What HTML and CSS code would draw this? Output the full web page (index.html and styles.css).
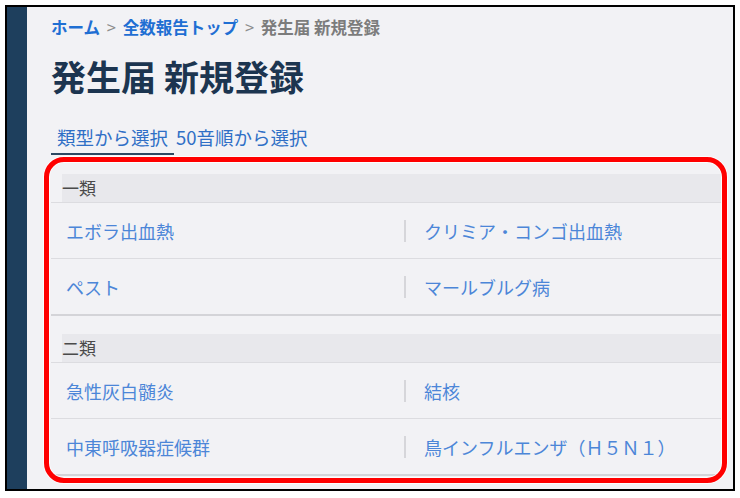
FILE: index.html
```html
<!DOCTYPE html>
<html lang="ja">
<head>
    <meta charset="UTF-8">
    <title>発生届 新規登録</title>
    <link rel="stylesheet" href="styles.css">
</head>
<body>
    <div class="frame">
        <div class="sidebar"></div>
        <div class="main">
            <div class="breadcrumb">
                <a class="crumb-link">ホーム</a>
                <span class="crumb-sep">&gt;</span>
                <a class="crumb-link">全数報告トップ</a>
                <span class="crumb-sep">&gt;</span>
                <span class="crumb-current">発生届 新規登録</span>
            </div>
            <h1 class="page-title">発生届 新規登録</h1>
            <div class="tabs">
                <a class="tab active">類型から選択</a>
                <a class="tab tab-second">50音順から選択</a>
            </div>
            <div class="panel">
                <!-- 一類 -->
                <div class="group">
                    <div class="group-head"><div class="group-header">一類</div></div>
                    <div class="row">
                        <a class="cell">エボラ出血熱</a>
                        <a class="cell cell-right">クリミア・コンゴ出血熱</a>
                    </div>
                    <div class="row">
                        <a class="cell">ペスト</a>
                        <a class="cell cell-right">マールブルグ病</a>
                    </div>
                </div>
                <!-- 二類 -->
                <div class="group">
                    <div class="group-head"><div class="group-header">二類</div></div>
                    <div class="row">
                        <a class="cell">急性灰白髄炎</a>
                        <a class="cell cell-right">結核</a>
                    </div>
                    <div class="row">
                        <a class="cell">中東呼吸器症候群</a>
                        <a class="cell cell-right">鳥インフルエンザ（Ｈ５Ｎ１）</a>
                    </div>
                </div>
            </div>
            <div class="highlight"></div>
        </div>
    </div>
</body>
</html>
```

FILE: styles.css
```css
body {
    margin: 0;
    background-color: #ffffff;
    font-family: "Noto Sans CJK JP", "Noto Sans", sans-serif;
}
.frame {
    margin: 5px 0 0 5px;
    width: 726px;
    height: 482px;
    border: 2px solid #000;
    display: flex;
    overflow: hidden;
}
.sidebar {
    width: 20px;
    background-color: #1e3f5d;
}
.main {
    flex: 1;
    position: relative;
    background-color: #f2f2f5;
    padding: 8px 12px 0 24px;
}
.breadcrumb {
    font-size: 16.5px;
    line-height: 24px;
    font-weight: bold;
}
.crumb-link {
    color: #1f6fd3;
}
.crumb-sep {
    color: #8c8c8c;
    font-weight: normal;
    margin: 0 3px;
}
.crumb-current {
    color: #7c7c7c;
}
.page-title {
    margin: 14px 0 0 0;
    font-size: 35px;
    line-height: 46px;
    font-weight: bold;
    color: #1c3550;
}
.tabs {
    margin-top: 24px;
    display: flex;
}
.tab {
    font-size: 18.5px;
    line-height: 28px;
    color: #2f6fc6;
    padding: 0 6px 2px 6px;
    border-bottom: 2px solid transparent;
}
.tab.active {
    border-bottom-color: #2c4862;
}
.tab-second {
    padding-left: 2px;
}
.panel {
    margin-top: 2px;
}
.group {
    padding-top: 17px;
    border-bottom: 2px solid #d4d4d8;
}
.group + .group {
    padding-top: 18px;
}
.group-head {
    border-bottom: 1px solid #dcdce0;
}
.group-header {
    margin-left: 11px;
    height: 28px;
    line-height: 28px;
    font-size: 17px;
    color: #4a4a4a;
    background-color: #e8e8ec;
}
.row {
    display: grid;
    grid-template-columns: 353px 1fr;
    height: 55px;
    align-items: center;
    border-bottom: 1px solid #dcdce0;
}
.row:last-child {
    border-bottom: none;
}
.cell {
    font-size: 18px;
    color: #4c86d8;
    padding-left: 15px;
}
.cell-right {
    border-left: 2px solid #d6d6da;
    padding-left: 18px;
    line-height: 22px;
}
/* annotation box drawn over the list */
.highlight {
    position: absolute;
    left: 17px;
    top: 150px;
    width: 673px;
    height: 316px;
    border: 5px solid #ff0000;
    border-radius: 20px;
    box-shadow: 0 0 0 1px rgba(255, 255, 255, 0.8), inset 0 0 0 1px rgba(255, 255, 255, 0.8);
}
```
